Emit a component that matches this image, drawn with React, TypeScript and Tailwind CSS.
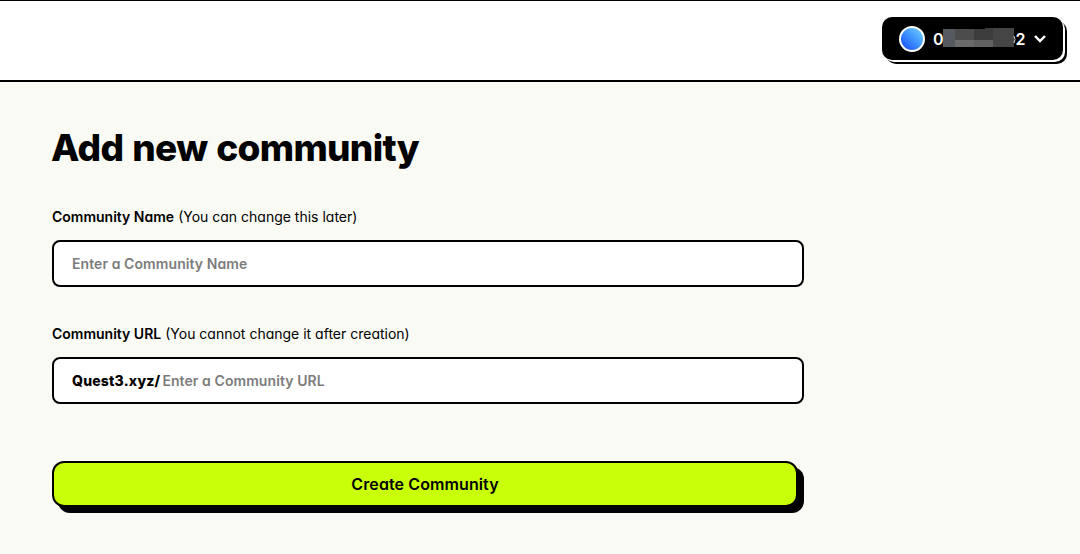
import { useState } from "react"
import type { ReactNode } from "react"

function WalletButton() {
  return (
    <button className="flex h-[43px] w-[181px] items-center rounded-[10px] bg-black pl-[17px] text-white shadow-[2px_2px_0_0_#fff,4px_4px_0_0_#000]">
      <span className="h-[26px] w-[26px] shrink-0 rounded-full border-2 border-white bg-linear-to-tr from-[#2638ff] to-[#78d4ff]" />
      <span className="ml-2 flex w-[92px] items-center justify-between text-[16px] leading-none font-semibold">
        <span>0</span>
        <svg width="74" height="20" viewBox="0 0 74 20" className="relative -top-px -mr-px -ml-px shrink-0">
          <g shapeRendering="crispEdges">
            <path d="M0 1h12v18H0z" fill="#555960" />
            <path d="M12 1h19v11H12z" fill="#4c4c4c" />
            <path d="M31 1h11V0h29v12H31z" fill="#3c3c3c" />
            <path d="M50 0h21v19H50z" fill="#454545" />
            <path d="M12 12h38v7H12z" fill="#6b6b6b" />
            <path d="M31 12h19v7H31z" fill="#616161" />
          </g>
          <path d="M71 8q2 3.500 0 7" fill="none" stroke="#ddd" />
        </svg>
        <span>2</span>
      </span>
      <svg width="12" height="8" viewBox="0 0 12 8" fill="none" className="ml-[9px]">
        <path d="M1 1l5 5 5-5" stroke="#fff" strokeWidth="2.4" />
      </svg>
    </button>
  )
}

interface FieldProps {
  id: string
  label: string
  hint: string
  children: ReactNode
}

function Field({ id, label, hint, children }: FieldProps) {
  return (
    <div>
      <label htmlFor={id} className="flex h-5 items-center text-[14px] whitespace-nowrap">
        <span className="font-semibold">{label}</span>
        <span className="ml-1">{hint}</span>
      </label>
      <div className="mt-[14px] flex h-[47px] items-center rounded-lg border-2 border-black bg-white pl-[18px] text-[14px]">
        {children}
      </div>
    </div>
  )
}

function App() {
  const [name, setName] = useState("")
  const [url, setUrl] = useState("")

  return (
    <div className="flex h-screen flex-col overflow-hidden bg-[#f9faf4] font-['Inter','Open_Sans',sans-serif] text-black [font-feature-settings:'cv11']">
      <header className="flex h-[82px] shrink-0 items-start justify-end border-t border-b-2 border-black bg-white pt-4 pr-[17px]">
        <WalletButton />
      </header>

      <main className="w-[804px] pt-[42px] pl-[52px]">
        <h1 className="-ml-px h-12 text-[37px] leading-[48px] font-extrabold tracking-[-0.7px] whitespace-nowrap [word-spacing:1.5px]">
          Add new community
        </h1>
        <form className="mt-[34px]" onSubmit={(e) => e.preventDefault()}>
          <Field id="name" label="Community Name" hint="(You can change this later)">
            <input
              id="name"
              value={name}
              onChange={(e) => setName(e.target.value)}
              className="w-full font-semibold tracking-[0.08px] outline-none placeholder:text-[#7c7c7c]"
              placeholder="Enter a Community Name"
            />
          </Field>
          <div className="mt-9">
            <Field id="url" label="Community URL" hint="(You cannot change it after creation)">
              <span className="font-extrabold tracking-[0.2px]">Quest3.xyz/</span>
              <input
                id="url"
                value={url}
                onChange={(e) => setUrl(e.target.value)}
                className="ml-0.5 w-full font-semibold tracking-[0.08px] outline-none placeholder:text-[#7c7c7c]"
                placeholder="Enter a Community URL"
              />
            </Field>
          </div>
          <button className="mt-[57px] h-[46px] w-[746px] rounded-xl border-2 border-black bg-[#caff0a] text-[16px] font-semibold tracking-[0.1px] shadow-[6px_6px_0_0_#000]">
            Create Community
          </button>
        </form>
      </main>
    </div>
  )
}

export default App
